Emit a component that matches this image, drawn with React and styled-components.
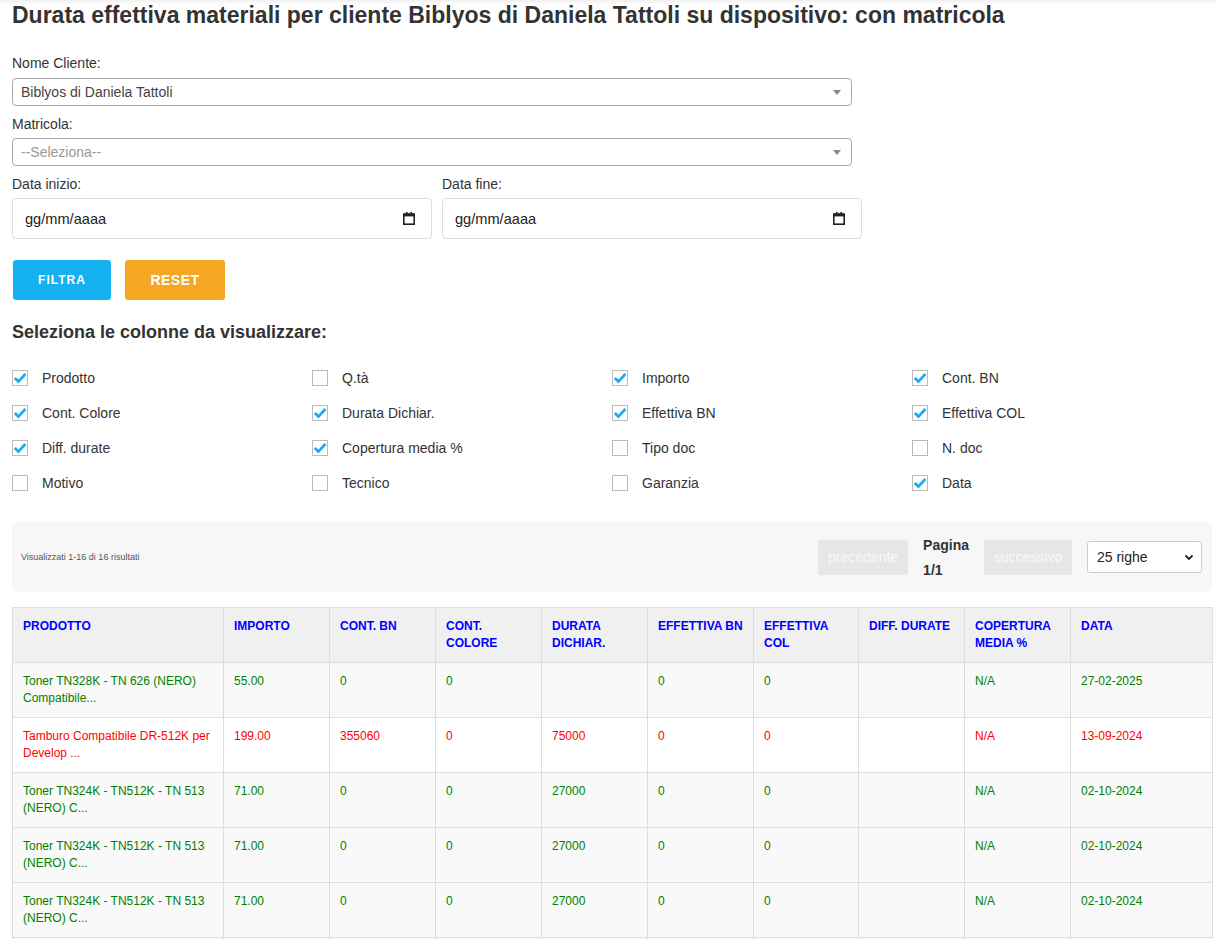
import React, { useState } from 'react';
import styled, { createGlobalStyle } from 'styled-components';

const GlobalStyle = createGlobalStyle`
  html, body {
    margin: 0;
    padding: 0;
    background: #fff;
    font-family: "Liberation Sans", Arial, sans-serif;
    color: #333;
  }
  * { box-sizing: border-box; }
`;

const Page = styled('div')`
  display: flex;
  flex-direction: column;
  padding: 0 3px 40px 12px;
  box-shadow: inset 0 6px 6px -6px rgba(0, 0, 0, 0.12);
`;

const Title = styled('h1')`
  margin: 0;
  font-size: 23px;
  line-height: 30px;
  font-weight: bold;
  color: #333;
`;

const Form = styled('div')`
  display: flex;
  flex-direction: column;
  width: 850px;
  margin-top: 25px;
`;

const Label = styled('div')`
  font-size: 14px;
  line-height: 16px;
  color: #333;
  margin-bottom: ${(p) => p.$mb || 7}px;
`;

const FakeSelect = styled('div')`
  display: flex;
  align-items: center;
  justify-content: space-between;
  width: 840px;
  height: 28px;
  padding: 0 8px 0 8px;
  border: 1px solid #aaa;
  border-radius: 4px;
  font-size: 14px;
  color: ${(p) => (p.$placeholder ? '#999' : '#444')};
  margin-bottom: 10px;
`;

const Arrow = styled('span')`
  width: 0;
  height: 0;
  border-left: 4px solid transparent;
  border-right: 4px solid transparent;
  border-top: 5px solid #888;
  margin-right: 2px;
`;

const DateRow = styled('div')`
  display: flex;
  gap: 10px;
`;

const DateField = styled('div')`
  display: flex;
  flex-direction: column;
  width: 420px;
`;

const DateBox = styled('div')`
  display: flex;
  align-items: center;
  justify-content: space-between;
  height: 41px;
  padding: 0 16px 0 12px;
  border: 1px solid #ddd;
  border-radius: 4px;
  font-size: 14.6px;
  color: #222;
`;

const Buttons = styled('div')`
  display: flex;
  gap: 14px;
  margin-top: 21px;
  padding-left: 1px;
`;

const Button = styled('button')`
  width: ${(p) => p.$w}px;
  height: 40px;
  border: none;
  border-radius: 3px;
  background: ${(p) => p.$bg};
  color: #fff;
  font-family: "Liberation Sans", Arial, sans-serif;
  font-weight: bold;
  font-size: ${(p) => p.$fs}px;
  letter-spacing: ${(p) => p.$ls}px;
`;

const SectionTitle = styled('h2')`
  margin: 21px 0 17px;
  font-size: 18px;
  line-height: 22px;
  font-weight: bold;
  color: #333;
`;

const ColumnsGrid = styled('div')`
  display: grid;
  grid-template-columns: repeat(4, 300px);
  grid-auto-rows: 35px;
`;

const CheckItem = styled('label')`
  display: flex;
  align-items: center;
  gap: 14px;
  font-size: 14px;
  color: #333;
`;

const Box = styled('span')`
  display: flex;
  align-items: center;
  justify-content: center;
  width: 16px;
  height: 16px;
  border: 1px solid #bbb;
  background: #fff;
`;

const PagerBar = styled('div')`
  display: flex;
  align-items: center;
  justify-content: space-between;
  width: 1200px;
  height: 70px;
  margin-top: 22px;
  padding: 0 10px 0 9px;
  background: #f7f7f7;
  border-radius: 6px;
`;

const Info = styled('span')`
  font-size: 9px;
  color: #555;
`;

const PagerControls = styled('div')`
  display: flex;
  align-items: center;
`;

const PageButton = styled('div')`
  display: flex;
  align-items: center;
  justify-content: center;
  width: ${(p) => p.$w}px;
  height: 35px;
  background: #e6e6e6;
  border-radius: 3px;
  color: #f8f8f8;
  font-size: 14px;
`;

const PageInfo = styled('div')`
  display: flex;
  flex-direction: column;
  gap: 9px;
  margin: 0 15px;
  font-size: 14px;
  line-height: 16px;
  font-weight: bold;
  color: #333;
`;

const RowsSelect = styled('div')`
  display: flex;
  align-items: center;
  justify-content: space-between;
  width: 115px;
  height: 32px;
  margin-left: 15px;
  padding: 0 6px 0 9px;
  border: 1px solid #ccc;
  border-radius: 3px;
  background: #fff;
  font-size: 14px;
  color: #222;
`;

const Table = styled('table')`
  width: 1200px;
  margin-top: 15px;
  border-collapse: collapse;
  table-layout: fixed;
  font-size: 12px;
`;

const Th = styled('th')`
  height: 55px;
  padding: 10px 10px;
  vertical-align: top;
  text-align: left;
  background: #f0f0f0;
  border: 1px solid #ddd;
  color: #0000ff;
  font-weight: bold;
  text-transform: uppercase;
  line-height: 17px;
`;

const Tr = styled('tr')`
  background: ${(p) => (p.$red ? '#fff' : '#f9f9f9')};
  color: ${(p) => (p.$red ? '#ff0000' : '#008000')};
`;

const Td = styled('td')`
  height: 54.6px;
  padding: 10px 10px;
  vertical-align: top;
  border: 1px solid #ddd;
  line-height: 17px;
`;

function CalendarIcon() {
  return (
    <svg width="12" height="13" viewBox="0 0 12 13">
      <rect x="3" y="0" width="1.6" height="3" fill="#222" />
      <rect x="7.4" y="0" width="1.6" height="3" fill="#222" />
      <rect x="0.8" y="2" width="10.4" height="10.2" fill="none" stroke="#222" strokeWidth="1.6" />
      <rect x="0.8" y="2" width="10.4" height="2.4" fill="#222" />
    </svg>
  );
}

function Check() {
  return (
    <svg width="14" height="12" viewBox="0 0 14 12">
      <path d="M1.8 6 L5.4 9.6 L12.4 2" fill="none" stroke="#1aaef0" strokeWidth="2.8" />
    </svg>
  );
}

function ChevronDown() {
  return (
    <svg width="12" height="12" viewBox="0 0 12 12">
      <path d="M2.5 4.5 L6 8 L9.5 4.5" fill="none" stroke="#222" strokeWidth="1.8" />
    </svg>
  );
}

const columnOptions = [
  ['Prodotto', true], ['Q.tà', false], ['Importo', true], ['Cont. BN', true],
  ['Cont. Colore', true], ['Durata Dichiar.', true], ['Effettiva BN', true], ['Effettiva COL', true],
  ['Diff. durate', true], ['Copertura media %', true], ['Tipo doc', false], ['N. doc', false],
  ['Motivo', false], ['Tecnico', false], ['Garanzia', false], ['Data', true],
];

const headers = [
  ['Prodotto', 211], ['Importo', 106], ['Cont. BN', 106], ['Cont. Colore', 106],
  ['Durata Dichiar.', 106], ['Effettiva BN', 106], ['Effettiva COL', 105],
  ['Diff. durate', 106], ['Copertura media %', 106], ['Data', 142],
];

const tonerRow = ['Toner TN324K - TN512K - TN 513 (NERO) C...', '71.00', '0', '0', '27000', '0', '0', '', 'N/A', '02-10-2024'];

const rows = [
  { cells: ['Toner TN328K - TN 626 (NERO) Compatibile...', '55.00', '0', '0', '', '0', '0', '', 'N/A', '27-02-2025'] },
  { red: true, cells: ['Tamburo Compatibile DR-512K per Develop ...', '199.00', '355060', '0', '75000', '0', '0', '', 'N/A', '13-09-2024'] },
  { cells: tonerRow },
  { cells: tonerRow },
  { cells: tonerRow },
  { cells: tonerRow },
];

export default function App() {
  const [options, setOptions] = useState(columnOptions);

  const toggle = (i) =>
    setOptions((prev) => prev.map((o, j) => (j === i ? [o[0], !o[1]] : o)));

  return (
    <Page>
      <GlobalStyle />
      <Title>Durata effettiva materiali per cliente Biblyos di Daniela Tattoli su dispositivo: con matricola</Title>

      <Form>
        <Label>Nome Cliente:</Label>
        <FakeSelect>
          Biblyos di Daniela Tattoli
          <Arrow />
        </FakeSelect>
        <Label $mb={6}>Matricola:</Label>
        <FakeSelect $placeholder>
          --Seleziona--
          <Arrow />
        </FakeSelect>
        <DateRow>
          <DateField>
            <Label $mb={6}>Data inizio:</Label>
            <DateBox>
              gg/mm/aaaa
              <CalendarIcon />
            </DateBox>
          </DateField>
          <DateField>
            <Label $mb={6}>Data fine:</Label>
            <DateBox>
              gg/mm/aaaa
              <CalendarIcon />
            </DateBox>
          </DateField>
        </DateRow>
      </Form>

      <Buttons>
        <Button $w={98} $bg="#16b1f0" $fs={12} $ls={1}>FILTRA</Button>
        <Button $w={100} $bg="#f5a623" $fs={14} $ls={0.5}>RESET</Button>
      </Buttons>

      <SectionTitle>Seleziona le colonne da visualizzare:</SectionTitle>

      <ColumnsGrid>
        {options.map(([name, on], i) => (
          <CheckItem key={name} onClick={() => toggle(i)}>
            <Box>{on && <Check />}</Box>
            {name}
          </CheckItem>
        ))}
      </ColumnsGrid>

      <PagerBar>
        <Info>Visualizzati 1-16 di 16 risultati</Info>
        <PagerControls>
          <PageButton $w={90}>precedente</PageButton>
          <PageInfo>
            <span>Pagina</span>
            <span>1/1</span>
          </PageInfo>
          <PageButton $w={88}>successivo</PageButton>
          <RowsSelect>
            25 righe
            <ChevronDown />
          </RowsSelect>
        </PagerControls>
      </PagerBar>

      <Table>
        <colgroup>
          {headers.map(([h, w]) => (
            <col key={h} style={{ width: w }} />
          ))}
        </colgroup>
        <thead>
          <tr>
            {headers.map(([h]) => (
              <Th key={h}>{h}</Th>
            ))}
          </tr>
        </thead>
        <tbody>
          {rows.map((r, i) => (
            <Tr key={i} $red={r.red}>
              {r.cells.map((c, j) => (
                <Td key={j}>{c}</Td>
              ))}
            </Tr>
          ))}
        </tbody>
      </Table>
    </Page>
  );
}
